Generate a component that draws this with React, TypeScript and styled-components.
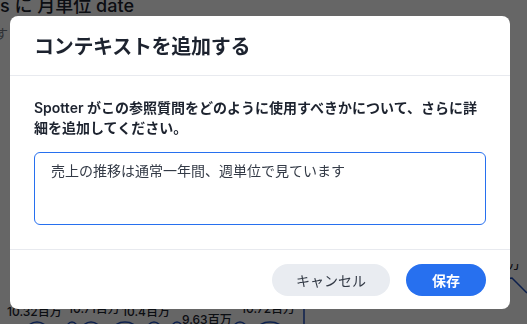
import React from 'react';
import styled, { createGlobalStyle } from 'styled-components';

const GlobalStyle = createGlobalStyle`
  html, body {
    margin: 0;
    padding: 0;
    background: #ffffff;
  }
  body {
    font-family: Inter, 'Noto Sans CJK JP', sans-serif;
    overflow: hidden;
  }
`;

const Page = styled.div`
  width: 527px;
  height: 324px;
  display: flex;
  flex-direction: column;
  overflow: hidden;
`;
const PageTitle = styled.div`
  font-size: 18px;
  line-height: 20px;
  margin-top: -4px;
  font-weight: 500;
  color: #1d232f;
  white-space: nowrap;
`;
const PageSub = styled.div`
  font-size: 13px;
  line-height: 18px;
  margin-top: 8px;
  margin-left: -5px;
  color: #777e8b;
`;
const Chart = styled.svg`
  display: block;
  margin-top: auto;
`;

const Overlay = styled.div`
  position: fixed;
  inset: 0;
  background: rgba(0, 0, 0, 0.6);
  display: flex;
  align-items: center;
  padding-left: 10px;
`;
const Dialog = styled.div`
  width: 500px;
  background: #ffffff;
  border-radius: 8px;
  overflow: hidden;
  color: #1d232f;
`;
const Header = styled.div`
  height: 59px;
  display: flex;
  align-items: center;
  padding: 0 24px;
  border-bottom: 1px solid #e8eaef;
`;
const Title = styled.h2`
  margin: 0;
  font-size: 20px;
  font-weight: 700;
  letter-spacing: -0.3px;
`;
const Body = styled.div`
  padding: 22px 24px 24px;
  border-bottom: 1px solid #e8eaef;
`;
const Text = styled.p`
  margin: 0 0 14px;
  font-size: 14px;
  line-height: 20px;
  font-weight: 600;
`;
const TextArea = styled.textarea`
  display: block;
  box-sizing: border-box;
  width: 100%;
  height: 73px;
  margin: 0;
  padding: 8px 16px;
  border: 1px solid #2770ef;
  border-radius: 6px;
  resize: none;
  outline: none;
  font-family: Inter, 'Noto Sans CJK JP', sans-serif;
  font-size: 14px;
  line-height: 20px;
  color: #333a46;
`;
const Footer = styled.div`
  display: flex;
  justify-content: flex-end;
  gap: 16px;
  padding: 14px 24px 13px;
`;
const Button = styled.button<{ primary?: boolean }>`
  height: 32px;
  min-width: 80px;
  padding: 0 24px;
  border: none;
  border-radius: 16px;
  background: ${({ primary }) => (primary ? '#2770ef' : '#e9ecf1')};
  color: ${({ primary }) => (primary ? '#ffffff' : '#333a46')};
  font-family: Inter, 'Noto Sans CJK JP', sans-serif;
  font-size: 14px;
  font-weight: ${({ primary }) => (primary ? 600 : 400)};
  cursor: pointer;
`;

// data labels of the chart behind the dialog (y is the baseline in the svg)
const labels = [
  { x: 7, y: 52, t: '10.32百万', anchor: 'start' },
  { x: 68, y: 49, t: '10.71百万', anchor: 'start' },
  { x: 122, y: 52, t: '10.4百万', anchor: 'start' },
  { x: 182, y: 60, t: '9.63百万', anchor: 'start' },
  { x: 241, y: 49, t: '10.72百万', anchor: 'start' },
  { x: 520, y: 5, t: '10.5百万', anchor: 'end' },
];
const dots = [
  { cx: 37, rx: 10 },
  { cx: 72, rx: 6 },
  { cx: 91, rx: 9 },
  { cx: 125, rx: 12 },
  { cx: 154, rx: 7 },
  { cx: 177, rx: 6 },
  { cx: 240, rx: 7 },
  { cx: 270, rx: 13 },
];

const App: React.FC = () => {
  return (
    <>
      <GlobalStyle />
      <Page>
        <PageTitle>s に 月単位 date</PageTitle>
        <PageSub>す</PageSub>
        <Chart width="527" height="60" viewBox="0 0 527 60">
          <polyline
            points="470,20 512,14 527,29"
            fill="none"
            stroke="#1f4fbf"
            strokeWidth="1.5"
          />
          <line x1="304" y1="44" x2="304" y2="60" stroke="#1f4fbf" strokeWidth="1.5" />
          {dots.map((d) => (
            <ellipse
              key={d.cx}
              cx={d.cx}
              cy={66}
              rx={d.rx}
              ry={8}
              fill="#ffffff"
              stroke="#1f4fbf"
              strokeWidth="1.5"
            />
          ))}
          {labels.map((l) => (
            <text
              key={l.t + l.x}
              x={l.x}
              y={l.y}
              textAnchor={l.anchor}
              fontSize="12"
              fontWeight="500"
              fill="#1d232f"
              fontFamily="Inter, 'Noto Sans CJK JP', sans-serif"
            >
              {l.t}
            </text>
          ))}
        </Chart>
      </Page>
      <Overlay>
        <Dialog>
          <Header>
            <Title>コンテキストを追加する</Title>
          </Header>
          <Body>
            <Text>
              Spotter がこの参照質問をどのように使用すべきかについて、さらに詳細を追加してください。
            </Text>
            <TextArea defaultValue="売上の推移は通常一年間、週単位で見ています" />
          </Body>
          <Footer>
            <Button>キャンセル</Button>
            <Button primary>保存</Button>
          </Footer>
        </Dialog>
      </Overlay>
    </>
  );
};

export default App;
